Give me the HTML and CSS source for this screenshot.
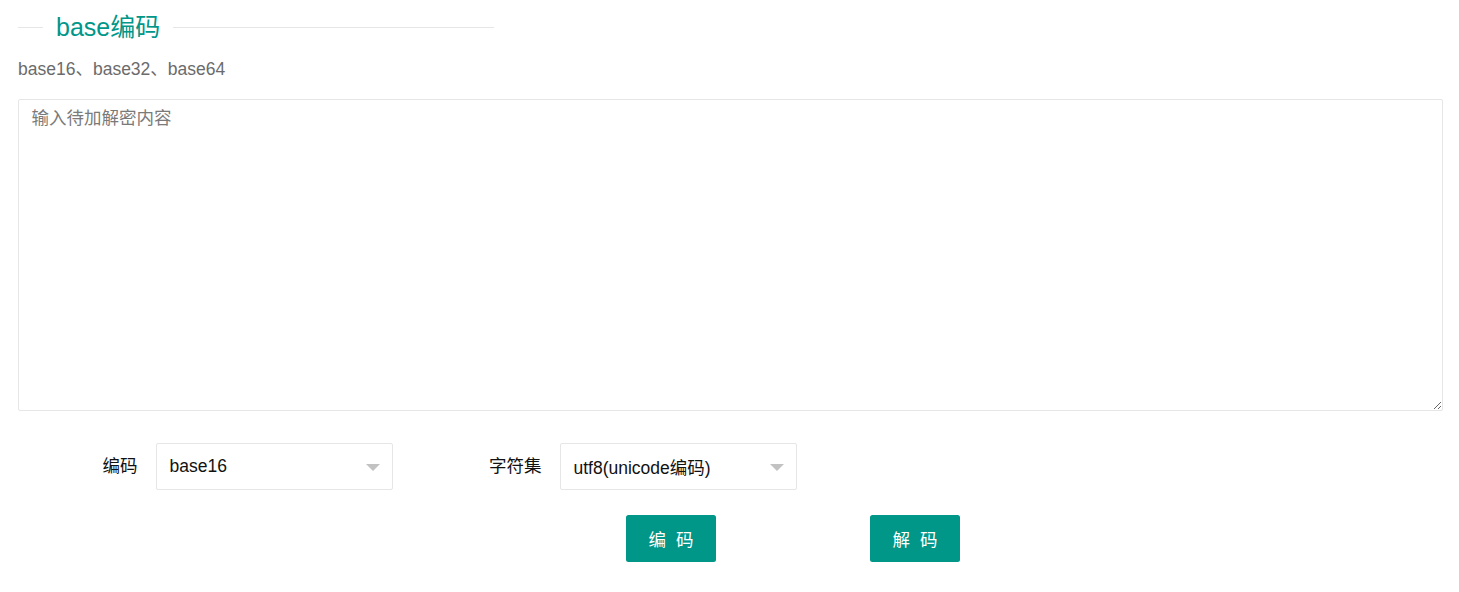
FILE: index.html
```html
<!DOCTYPE html>
<html lang="zh-CN">
<head>
<meta charset="utf-8">
<title>base编码</title>
<link rel="stylesheet" href="styles.css">
</head>
<body>
<div class="page">
  <fieldset class="field-title">
    <legend>base编码</legend>
  </fieldset>
  <div class="aux">base16、base32、base64</div>
  <textarea class="textarea" placeholder="输入待加解密内容"></textarea>
  <div class="form-row">
    <div class="inline">
      <label class="form-label">编码</label>
      <div class="select">
        <span class="select-value">base16</span>
        <i class="caret"></i>
      </div>
    </div>
    <div class="inline">
      <label class="form-label">字符集</label>
      <div class="select">
        <span class="select-value">utf8(unicode编码)</span>
        <i class="caret"></i>
      </div>
    </div>
  </div>
  <div class="btn-row">
    <button class="btn">编 码</button>
    <button class="btn">解 码</button>
  </div>
</div>
</body>
</html>
```
FILE: styles.css
```css
* { box-sizing: border-box; }
html, body { margin: 0; padding: 0; background: #fff; }
body {
  font-family: "Liberation Sans", "Noto Sans CJK SC", sans-serif;
  font-size: 17.5px;
  color: #222;
}
.page {
  padding: 0 16px 0 18px;
}
.field-title {
  width: 476px;
  margin: 12px 0 0 0;
  padding: 0;
  border: none;
  border-top: 1px solid #e6e6e6;
  min-width: 0;
}
.field-title legend {
  margin-left: 25px;
  padding: 0 13px;
  font-size: 25px;
  line-height: 30px;
  font-weight: 400;
  color: #009688;
}
.aux {
  margin-top: 15px;
  line-height: 25px;
  color: #6b6b6b;
}
.textarea {
  display: block;
  width: 100%;
  height: 312px;
  margin-top: 17px;
  padding: 5.5px 12.5px;
  border: 1px solid #e6e6e6;
  border-radius: 2px;
  font-family: "Liberation Sans", "Noto Sans CJK SC", sans-serif;
  font-size: 17.5px;
  line-height: 25px;
  color: #222;
  resize: both;
  outline: none;
}
.textarea::placeholder { color: #7a7a7a; }
.form-row {
  display: flex;
  margin-top: 32px;
  gap: 29px;
}
.inline {
  display: flex;
  align-items: center;
}
.form-label {
  width: 138px;
  padding: 0 18.5px 0 0;
  text-align: right;
  line-height: 25px;
  color: #111;
}
.select {
  width: 237px;
  height: 47px;
  display: flex;
  align-items: center;
  justify-content: space-between;
  padding: 0 12px 0 12.5px;
  border: 1px solid #e6e6e6;
  border-radius: 2px;
  color: #111;
}
.caret {
  width: 0;
  height: 0;
  border-left: 7.5px solid transparent;
  border-right: 7.5px solid transparent;
  border-top: 7.5px solid #c2c2c2;
  margin-top: 2px;
}
.btn-row {
  display: flex;
  gap: 154px;
  margin-top: 25px;
  padding-left: 608px;
}
.btn {
  width: 90px;
  height: 47px;
  border: none;
  border-radius: 2.5px;
  background: #009688;
  color: #fff;
  font-family: "Liberation Sans", "Noto Sans CJK SC", sans-serif;
  font-size: 17.5px;
  word-spacing: 5px;
  padding: 0;
  cursor: pointer;
}
```
